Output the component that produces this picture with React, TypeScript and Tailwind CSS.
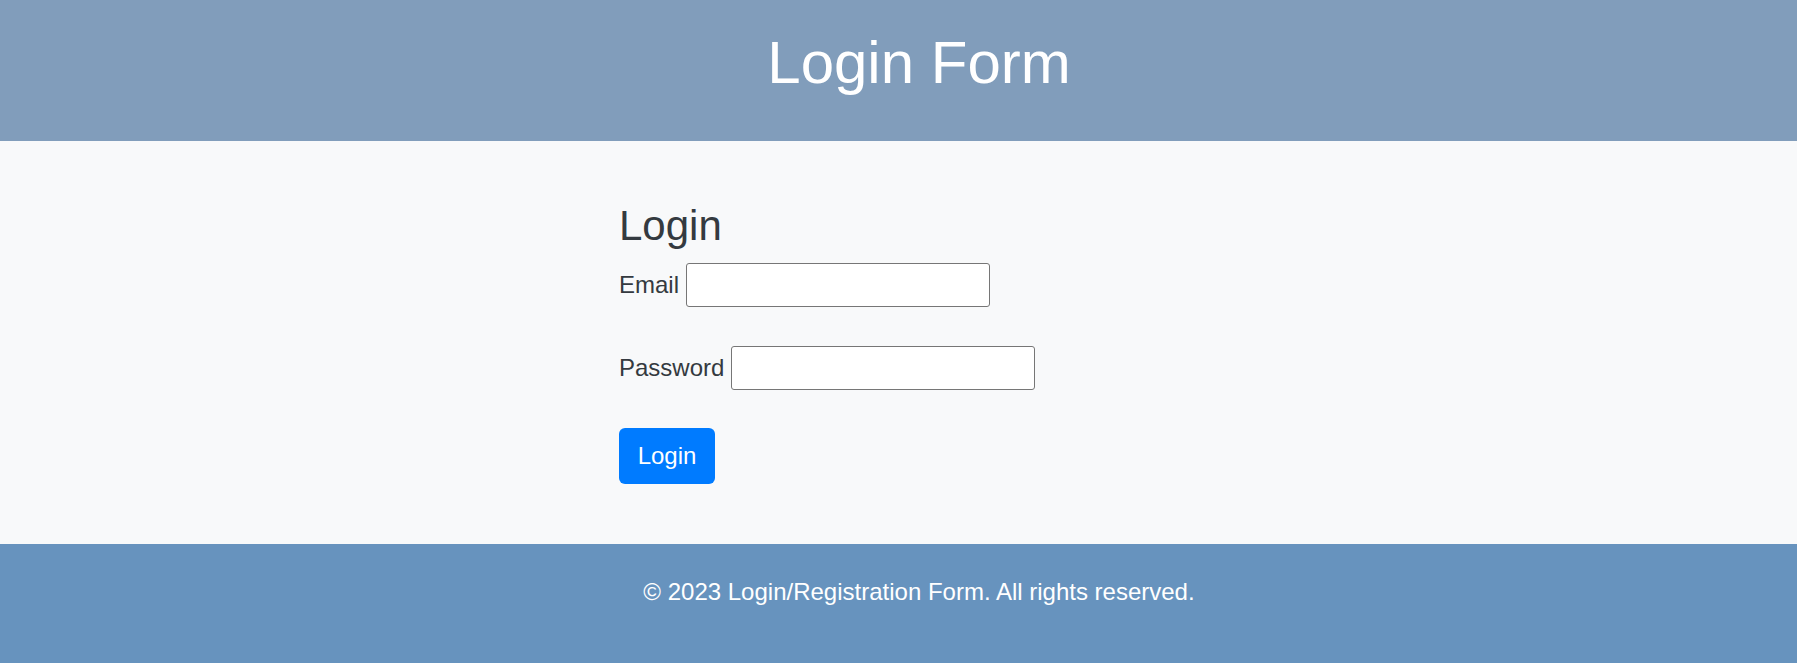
import React from 'react';

const App: React.FC = () => {
  return (
    <div className="min-h-screen flex flex-col bg-[#f8f9fa] font-['Liberation_Sans',Arial,sans-serif]">
      {/* header */}
      <header className="h-[141px] bg-[#819dbb] pl-[41px] pt-[27px]">
        <h1 className="text-center text-[60px] leading-[72px] text-white">Login Form</h1>
      </header>

      <main className="pl-[41px] py-[60px]">
        <div className="w-[600px] mx-auto text-[#343a40]">
          <h2 className="text-[42px] leading-[50px] mb-[12px]">Login</h2>
          <form onSubmit={(e) => e.preventDefault()}>
            <div className="flex items-center gap-[7px]">
              <label htmlFor="email" className="text-[24px] leading-[36px]">Email</label>
              <input
                id="email"
                type="email"
                className="w-[304px] h-[44px] bg-white border border-[#767676] rounded-[3px] px-2 text-[20px]"
              />
            </div>
            <div className="flex items-center gap-[7px] mt-[39px]">
              <label htmlFor="password" className="text-[24px] leading-[36px]">Password</label>
              <input
                id="password"
                type="password"
                className="w-[304px] h-[44px] bg-white border border-[#767676] rounded-[3px] px-2 text-[20px]"
              />
            </div>
            <button
              type="submit"
              className="mt-[38px] w-[96px] h-[56px] rounded-[6px] bg-[#007bff] text-white text-[24px] leading-[36px]"
            >
              Login
            </button>
          </form>
        </div>
      </main>

      <footer className="h-[119px] bg-[#6793be] pl-[41px] pt-[30px]">
        <p className="text-center text-[24px] leading-[36px] text-white">
          © 2023 Login/Registration Form. All rights reserved.
        </p>
      </footer>
    </div>
  );
};

export default App;
